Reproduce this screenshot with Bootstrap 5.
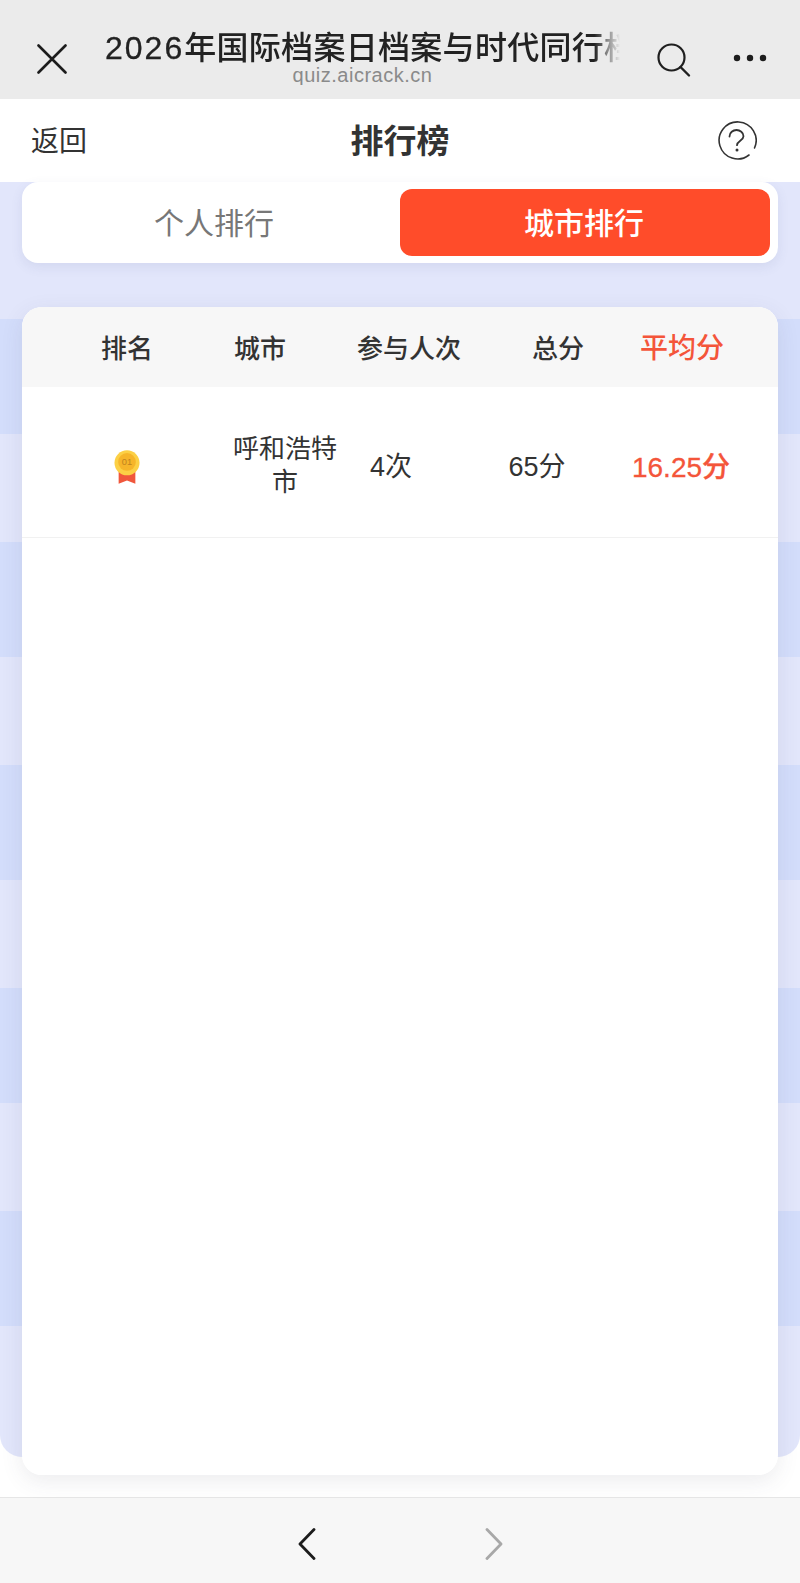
<!DOCTYPE html>
<html lang="zh-CN">
<head>
<meta charset="utf-8">
<title>排行榜</title>
<link href="https://cdn.jsdelivr.net/npm/bootstrap@5.3.0/dist/css/bootstrap.min.css" rel="stylesheet">
<style>
html,body{margin:0;height:1583px;overflow:hidden;background:#fff}
body{font-family:"Liberation Sans","Noto Sans CJK SC",sans-serif;color:#333}
.shell{height:1583px}
.wx-bar{height:99px;background:#ebebeb;padding-left:37px}
.wx-title-wrap{width:515px;margin:0 36px 0 38px;padding-top:29px;text-align:center;line-height:1}
.wx-title{font-family:"Liberation Sans","Noto Sans CJK SC",sans-serif;font-size:32px;font-weight:500;line-height:38px;color:#222;white-space:nowrap;overflow:hidden;-webkit-mask-image:linear-gradient(to right,#000 95%,transparent 100%);mask-image:linear-gradient(to right,#000 95%,transparent 100%);text-align:left;letter-spacing:.3px}
.wx-year{letter-spacing:2px;-webkit-text-stroke:.3px #222}
.wx-url{font-size:20px;line-height:20px;color:#8a8a8a;letter-spacing:.5px;margin-top:-2px}
.wx-close{width:30px;height:30px;margin-top:44px}
.wx-search{width:36px;height:36px;margin-top:42px}
.wx-dots{width:36px;height:10px;margin:53px 0 0 40px}
.page-head{height:83px;background:#fff;padding:0 43px 0 31px}
.back-label{font-size:28px;line-height:1;margin-top:3px}
.head-title{font-size:33px;font-weight:700;color:#333;line-height:1;left:0;right:0;top:26px}
.help-mark{width:40px;height:40px}
.stage{height:1315px;padding:0 22px;gap:44px;position:relative}
.stage::before{content:"";position:absolute;left:0;right:0;top:0;bottom:40px;border-radius:0 0 22px 22px;background-color:#e2e6fb;background-image:linear-gradient(#e2e6fb,#e2e6fb),linear-gradient(#e2e6fb,#e2e6fb),linear-gradient(to bottom,#d3ddfb 0,#d3ddfb 115px,#e2e6fb 115px,#e2e6fb 100%);background-size:100% 137px,100% 40px,100% 223px;background-position:0 0,0 100%,0 137px;background-repeat:no-repeat,no-repeat,repeat-y}
.tab-panel{position:relative;height:81px;background:#fff;border-radius:16px;padding:7px 8px 7px 0;box-shadow:0 4px 12px rgba(80,90,140,.1)}
.tab-item{flex:1 1 0;font-size:30px;line-height:1;color:#777;border-radius:12px;padding-top:2px}
.tab-item-first{flex:0 0 378px;padding-left:6px}
.tab-item-on{background:#ff4c2a;color:#fff;font-weight:500;padding-right:2px}
.rank-shadow{position:relative;height:1168px;border-radius:20px;box-shadow:0 6px 22px rgba(70,70,90,.1)}
.rank-panel{position:relative;height:1168px;background:#fff;border-radius:20px;overflow:hidden}
.rank-head{display:grid;grid-template-columns:102px 164px 134px 164px 84px;height:80px;padding-left:54px;padding-top:4px;background:#f7f7f7;font-size:26px;font-weight:500;color:#333;justify-items:center;align-items:center}
.head-hot{font-size:28px;white-space:nowrap}
.rank-row{display:grid;grid-template-columns:210px 106px 106px 186px 102px;height:151px;padding-top:11px;border-bottom:1px solid #f1f1f1;font-size:26px;color:#333;justify-items:center;align-items:center}
.city-cell{line-height:33px;text-align:center;width:106px;margin-top:-3px}
.num-cell{font-size:27px;white-space:nowrap}
.hot{color:#f4553a;font-weight:500}
.score-hot{font-size:28px;-webkit-text-stroke:.3px #f4553a}
.medal{width:26px;height:34px;margin-top:-1px}
.foot-bar{height:86px;background:#f7f7f7;border-top:1px solid #e6e6e6;gap:169px;padding-top:6px}
.foot-arrow{width:18px;height:32px}
</style>
</head>
<body>
<div class="shell d-flex flex-column">
  <div class="wx-bar d-flex align-items-start flex-shrink-0">
    <svg class="wx-close" viewBox="0 0 30 30" aria-hidden="true"><path d="M1.500 1.500 28.500 28.500M28.500 1.500 1.500 28.500" fill="none" stroke="#1c1c1c" stroke-width="2.600" stroke-linecap="round"/></svg>
    <div class="wx-title-wrap overflow-hidden">
      <div class="wx-title"><span class="wx-year">2026</span>年国际档案日档案与时代同行档</div>
      <div class="wx-url">quiz.aicrack.cn</div>
    </div>
    <svg class="wx-search" viewBox="0 0 36 36" aria-hidden="true"><circle cx="15.500" cy="15.500" r="13" fill="none" stroke="#1f1f1f" stroke-width="2.200"/><path d="M24.500 25 33 33.500" fill="none" stroke="#1f1f1f" stroke-width="2.400" stroke-linecap="round"/></svg>
    <svg class="wx-dots" viewBox="0 0 36 10" aria-hidden="true"><circle cx="5" cy="5" r="3.200" fill="#1c1c1c"/><circle cx="18" cy="5" r="3.200" fill="#1c1c1c"/><circle cx="31" cy="5" r="3.200" fill="#1c1c1c"/></svg>
  </div>
  <div class="page-head d-flex align-items-center justify-content-between position-relative flex-shrink-0">
    <span class="back-label">返回</span>
    <span class="head-title position-absolute text-center">排行榜</span>
    <svg class="help-mark" viewBox="0 0 40 40" aria-hidden="true"><path d="M32 34A18.500 18.500 0 1 1 37.500 27" fill="none" stroke="#333" stroke-width="1.600" stroke-linecap="round"/><path d="M12.500 15.500C12.500 11.500 16 9 19.500 9s7 2.500 7 6.200c0 4.500-6.500 4.500-6.500 9" fill="none" stroke="#333" stroke-width="1.800" stroke-linecap="round"/><circle cx="20" cy="29" r="1.500" fill="#333"/></svg>
  </div>
  <div class="stage d-flex flex-column flex-shrink-0">
    <div class="tab-panel d-flex">
      <div class="tab-item tab-item-first d-flex align-items-center justify-content-center">个人排行</div>
      <div class="tab-item tab-item-on d-flex align-items-center justify-content-center">城市排行</div>
    </div>
    <div class="rank-shadow">
      <div class="rank-panel">
        <div class="rank-head">
          <div>排名</div><div>城市</div><div>参与人次</div><div>总分</div><div class="hot head-hot">平均分</div>
        </div>
        <div class="rank-row">
          <svg class="medal" viewBox="0 0 28 36" aria-hidden="true">
            <path d="M5 21H23V36L14 32.500 5 36Z" fill="#f0573c"/>
            <circle cx="14" cy="13.500" r="13.500" fill="#fcd045"/>
            <circle cx="14" cy="12.500" r="9.500" fill="#f6b52a"/>
            <text x="14" y="16" text-anchor="middle" font-family="Liberation Sans,sans-serif" font-size="10" fill="#c08320">01</text>
          </svg>
          <div class="city-cell">呼和浩特市</div>
          <div class="num-cell">4次</div>
          <div class="num-cell">65分</div>
          <div class="num-cell hot score-hot">16.25分</div>
        </div>
      </div>
    </div>
  </div>
  <div class="foot-bar d-flex align-items-center justify-content-center flex-shrink-0">
    <svg class="foot-arrow" viewBox="0 0 18 32" aria-hidden="true"><path d="M16 1.500 2 16 16 30.500" fill="none" stroke="#1c1c1c" stroke-width="2.800" stroke-linecap="round" stroke-linejoin="round"/></svg>
    <svg class="foot-arrow" viewBox="0 0 18 32" aria-hidden="true"><path d="M2 1.500 16 16 2 30.500" fill="none" stroke="#a8a8a8" stroke-width="2.800" stroke-linecap="round" stroke-linejoin="round"/></svg>
  </div>
</div>
<script src="https://cdn.jsdelivr.net/npm/bootstrap@5.3.0/dist/js/bootstrap.bundle.min.js"></script>
</body>
</html>
